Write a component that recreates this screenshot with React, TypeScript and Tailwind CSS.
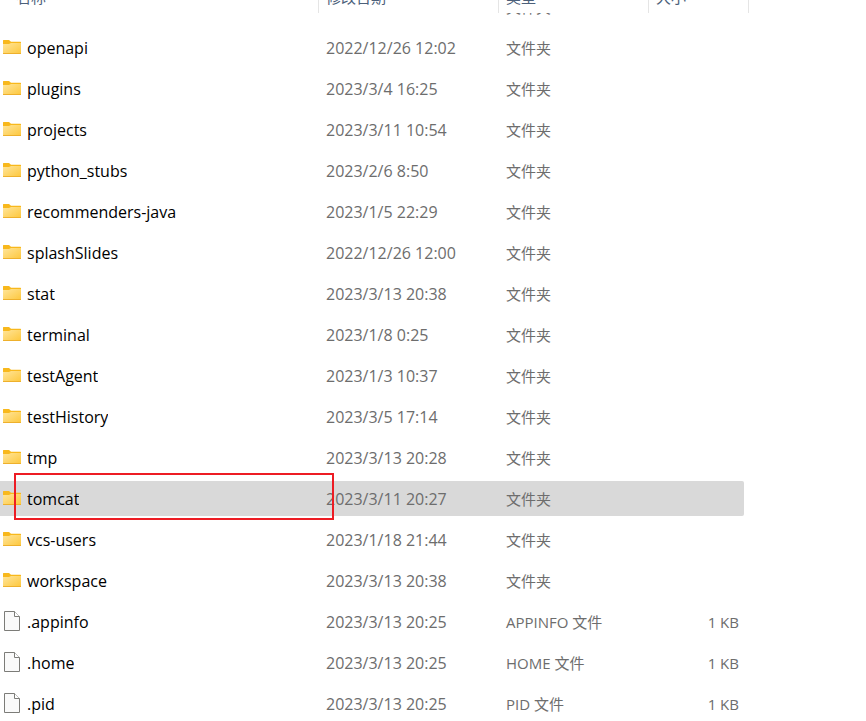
import React from 'react';
import { clsx } from 'clsx';

interface Entry {
  name: string;
  modified: string;
  type: string;
  size?: string;
}

const entries: Entry[] = [
  { name: 'openapi', modified: '2022/12/26 12:02', type: '文件夹' },
  { name: 'plugins', modified: '2023/3/4 16:25', type: '文件夹' },
  { name: 'projects', modified: '2023/3/11 10:54', type: '文件夹' },
  { name: 'python_stubs', modified: '2023/2/6 8:50', type: '文件夹' },
  { name: 'recommenders-java', modified: '2023/1/5 22:29', type: '文件夹' },
  { name: 'splashSlides', modified: '2022/12/26 12:00', type: '文件夹' },
  { name: 'stat', modified: '2023/3/13 20:38', type: '文件夹' },
  { name: 'terminal', modified: '2023/1/8 0:25', type: '文件夹' },
  { name: 'testAgent', modified: '2023/1/3 10:37', type: '文件夹' },
  { name: 'testHistory', modified: '2023/3/5 17:14', type: '文件夹' },
  { name: 'tmp', modified: '2023/3/13 20:28', type: '文件夹' },
  { name: 'tomcat', modified: '2023/3/11 20:27', type: '文件夹' },
  { name: 'vcs-users', modified: '2023/1/18 21:44', type: '文件夹' },
  { name: 'workspace', modified: '2023/3/13 20:38', type: '文件夹' },
  { name: '.appinfo', modified: '2023/3/13 20:25', type: 'APPINFO 文件', size: '1 KB' },
  { name: '.home', modified: '2023/3/13 20:25', type: 'HOME 文件', size: '1 KB' },
  { name: '.pid', modified: '2023/3/13 20:25', type: 'PID 文件', size: '1 KB' },
];

const columns = ['名称', '修改日期', '类型', '大小'];

const selectedName = 'tomcat';

const FolderIcon: React.FC = () => (
  <svg width="18" height="14" viewBox="0 0 18 14" className="block" aria-hidden="true">
    <defs>
      <linearGradient id="folder-front" x1="0" y1="0" x2="1" y2="1">
        <stop offset="0" stopColor="#ffe59a" />
        <stop offset="1" stopColor="#fdc73c" />
      </linearGradient>
    </defs>
    <path d="M0 .5Q0 0 .5 0H6L8 1.8H17.5Q18 1.8 18 2.3V6H0Z" fill="#f8b81c" />
    <path d="M0 4H6L8 3H18V13.5Q18 14 17.5 14H.5Q0 14 0 13.5Z" fill="url(#folder-front)" />
    <path d="M0 13H18V13.5Q18 14 17.5 14H.5Q0 14 0 13.5Z" fill="#eeb02c" />
  </svg>
);

const FileIcon: React.FC = () => (
  <svg width="16" height="20" viewBox="0 0 16 20" className="block" aria-hidden="true">
    <path d="M.5 .5H10.5L15.5 5.5V19.5H.5Z" fill="#fafafa" stroke="#7c7c78" />
    <path d="M10.5 .5V5.5H15.5" fill="#fff" stroke="#7c7c78" />
  </svg>
);

const Row: React.FC<{ entry: Entry; selected: boolean }> = ({ entry, selected }) => {
  const cell = clsx('flex h-[35px] items-center', selected && 'bg-[#d9d9d9]');

  return (
    <tr aria-selected={selected} className="text-[#6d6d6d]">
      <td className="relative p-0 pt-0.5 pb-1">
        <div className={clsx(cell, 'text-black')}>
          <span className="flex w-[27px] shrink-0 justify-start pb-0.5 pl-[3px]">
            {entry.size ? (
              <span className="pl-px">
                <FileIcon />
              </span>
            ) : (
              <FolderIcon />
            )}
          </span>
          <span className="truncate">{entry.name}</span>
        </div>
        {selected && (
          <div className="pointer-events-none absolute -top-1.5 -right-[15px] bottom-0 left-3.5 z-10 border-2 border-[#ed1c24]" />
        )}
      </td>
      <td className="p-0 pt-0.5 pb-1">
        <div className={clsx(cell, 'pl-[7px]')}>{entry.modified}</div>
      </td>
      <td className="p-0 pt-0.5 pb-1">
        <div className={clsx(cell, 'pl-[7px] text-[15px]')}>{entry.type}</div>
      </td>
      <td className="p-0 pt-0.5 pr-[5px] pb-1">
        <div className={clsx(cell, 'justify-end rounded-r-xs pr-[5px] text-[15px]')}>{entry.size}</div>
      </td>
      <td className="p-0" />
    </tr>
  );
};

export default function App() {
  return (
    <main
      lang="zh-CN"
      className="h-screen overflow-hidden bg-white font-['Open_Sans','Noto_Sans_CJK_SC',sans-serif] text-[16px] leading-5"
    >
      <table className="w-full table-fixed border-collapse whitespace-nowrap">
        <colgroup>
          <col className="w-[319px]" />
          <col className="w-[180px]" />
          <col className="w-[150px]" />
          <col className="w-[100px]" />
          <col />
        </colgroup>
        <thead>
          <tr className="text-left text-[15px] text-[#4c607a]">
            {columns.map((title, i) => (
              <th key={title} scope="col" className="p-0 font-normal">
                <div
                  className={clsx(
                    'flex h-[13px] items-end border-r border-[#e5e5e5] pb-1.5',
                    i === 0 ? 'pl-4' : 'pl-[7px]'
                  )}
                >
                  <button type="button">{title}</button>
                </div>
              </th>
            ))}
            <th className="p-0" />
          </tr>
        </thead>
        <tbody>
          {/* row scrolled under the header, only its lower edge shows */}
          <tr className="text-[#6d6d6d]">
            <td className="p-0" />
            <td className="p-0">
              <div className="flex h-[15px] items-end overflow-hidden pb-[11px] pl-[7px]">2023/3/13 20:38</div>
            </td>
            <td className="p-0">
              <div className="flex h-[15px] items-end overflow-hidden pb-[11px] pl-[7px] text-[15px]">文件夹</div>
            </td>
            <td className="p-0" />
            <td className="p-0" />
          </tr>
          {entries.map(entry => (
            <Row key={entry.name} entry={entry} selected={entry.name === selectedName} />
          ))}
        </tbody>
      </table>
    </main>
  );
}
